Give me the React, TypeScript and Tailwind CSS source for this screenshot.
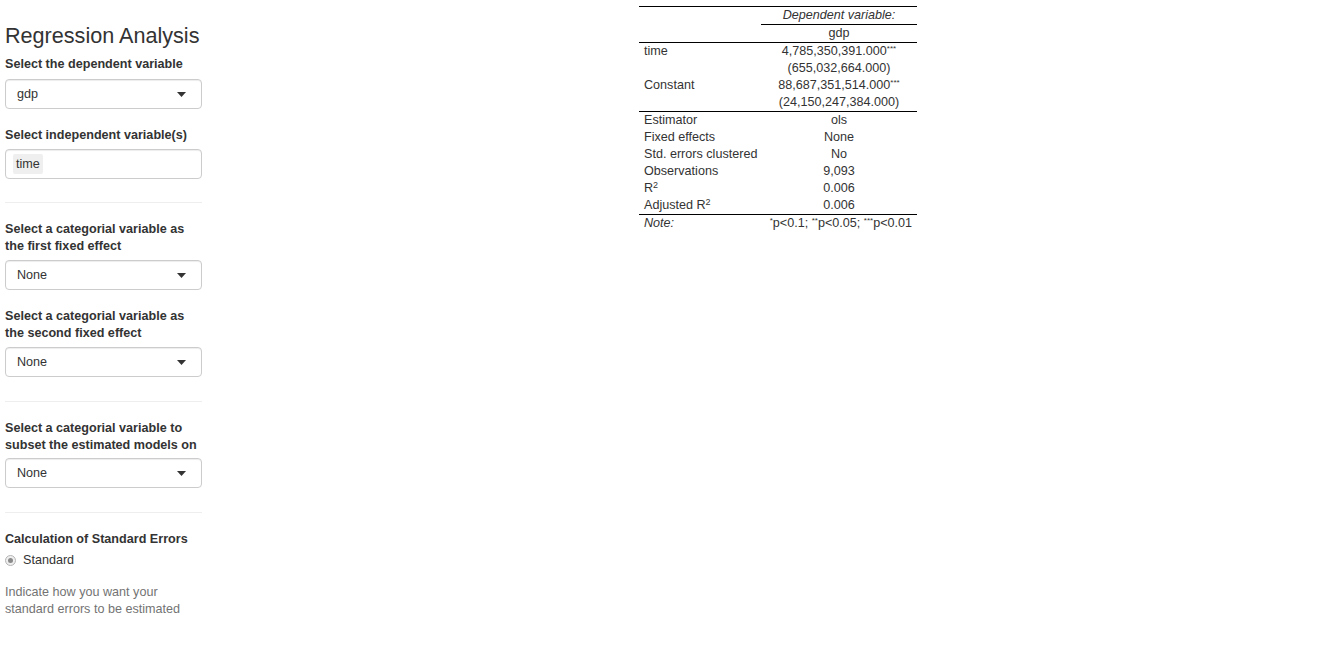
import React from 'react';

const font = { fontFamily: '"Liberation Sans", Arial, sans-serif' };

const Caret = () => (
  <svg width="9" height="5" viewBox="0 0 9 5" className="shrink-0">
    <path d="M0 0 L9 0 L4.5 5 Z" fill="#333" />
  </svg>
);

const SelectBox = ({ value, className = '' }: { value: string; className?: string }) => (
  <div className={`flex h-[30px] items-center justify-between rounded-[4px] border border-[#ccc] bg-white pl-[11px] pr-[15px] shadow-[inset_0_1px_1px_rgba(0,0,0,0.075)] ${className}`}>
    <span>{value}</span>
    <Caret />
  </div>
);

const Label = ({ children, className = '' }: { children: React.ReactNode; className?: string }) => (
  <div className={`font-bold leading-[17px] ${className}`}>{children}</div>
);

const Sidebar = () => (
  <div className="ml-[5px] w-[197px] shrink-0 text-[12.6px] text-[#333]">
    <h2 className="mt-[23px] text-[21.6px] leading-[26px] font-normal">Regression Analysis</h2>

    <Label className="mt-[7px]">Select the dependent variable</Label>
    <SelectBox value="gdp" className="mt-[6px]" />

    <Label className="mt-[18px]">Select independent variable(s)</Label>
    <div className="mt-[5px] flex h-[30px] items-center rounded-[4px] border border-[#ccc] bg-white pl-[7px] shadow-[inset_0_1px_1px_rgba(0,0,0,0.075)]">
      <span className="flex h-[20px] items-center rounded-[2px] bg-[#efefef] px-[3px]">time</span>
    </div>

    <hr className="mt-[23px] border-t border-[#eee]" />

    <Label className="mt-[18px]">
      Select a categorial variable as
      <br />
      the first fixed effect
    </Label>
    <SelectBox value="None" className="mt-[5px]" />

    <Label className="mt-[18px]">
      Select a categorial variable as
      <br />
      the second fixed effect
    </Label>
    <SelectBox value="None" className="mt-[5px]" />

    <hr className="mt-[24px] border-t border-[#eee]" />

    <Label className="mt-[18px]">
      Select a categorial variable to
      <br />
      subset the estimated models on
    </Label>
    <SelectBox value="None" className="mt-[4px]" />

    <hr className="mt-[24px] border-t border-[#eee]" />

    <Label className="mt-[18px]">Calculation of Standard Errors</Label>
    <div className="mt-[4px] flex items-center leading-[17px]">
      <span className="flex h-[11px] w-[11px] items-center justify-center rounded-full border border-[#b5b5b5] bg-[#efefef]">
        <span className="h-[5px] w-[5px] rounded-full bg-[#8a8a8a]" />
      </span>
      <span className="ml-[7px]">Standard</span>
    </div>

    <div className="mt-[15px] leading-[17px] text-[#737373]">
      Indicate how you want your
      <br />
      standard errors to be estimated
    </div>
  </div>
);

const Sup = ({ children }: { children: React.ReactNode }) => (
  <span className="relative top-[-4px] text-[8px] leading-none">{children}</span>
);

const Row = ({ left, right }: { left: React.ReactNode; right: React.ReactNode }) => (
  <div className="flex h-[17px] items-center leading-[17px]">
    <div className="w-[122px] shrink-0 pl-[5px]">{left}</div>
    <div className="flex-1 text-center">{right}</div>
  </div>
);

const ResultsTable = () => (
  <div className="ml-[437px] mt-[6px] w-[278px] text-[12.6px] text-[#333]">
    <div className="border-t border-black" />
    <div className="flex h-[17px] leading-[17px]">
      <div className="w-[122px] shrink-0" />
      <div className="flex-1 text-center italic">Dependent variable:</div>
    </div>
    <div className="flex">
      <div className="w-[122px] shrink-0" />
      <div className="flex-1 border-t border-black" />
    </div>
    <Row left="" right="gdp" />
    <div className="border-t border-black" />
    <Row left="time" right={<>4,785,350,391.000<Sup>***</Sup></>} />
    <Row left="" right="(655,032,664.000)" />
    <Row left="Constant" right={<>88,687,351,514.000<Sup>***</Sup></>} />
    <Row left="" right="(24,150,247,384.000)" />
    <div className="border-t border-black" />
    <Row left="Estimator" right="ols" />
    <Row left="Fixed effects" right="None" />
    <Row left="Std. errors clustered" right="No" />
    <Row left="Observations" right="9,093" />
    <Row left={<>R<span className="relative top-[-4px] text-[9px] leading-none">2</span></>} right="0.006" />
    <Row left={<>Adjusted R<span className="relative top-[-4px] text-[9px] leading-none">2</span></>} right="0.006" />
    <div className="border-t border-black" />
    <div className="flex h-[17px] items-center leading-[17px]">
      <div className="w-[122px] shrink-0 pl-[5px] italic">Note:</div>
      <div className="flex-1 pr-[5px] text-right">
        <Sup>*</Sup>p&lt;0.1; <Sup>**</Sup>p&lt;0.05; <Sup>***</Sup>p&lt;0.01
      </div>
    </div>
  </div>
);

export default function App() {
  return (
    <div className="flex min-h-[652px] w-full items-start bg-white" style={font}>
      <Sidebar />
      <ResultsTable />
    </div>
  );
}
